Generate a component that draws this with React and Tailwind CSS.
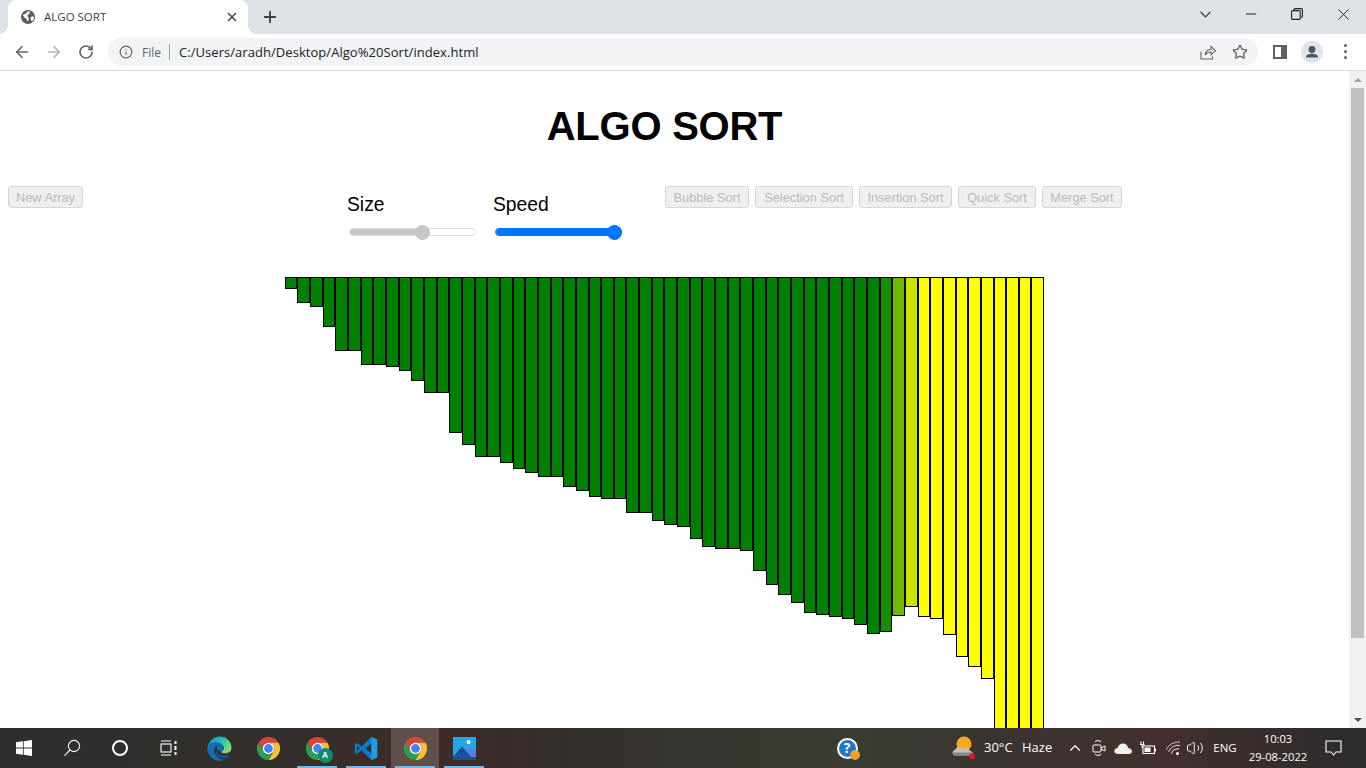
import React from "react";
import { ArrowLeft, ArrowRight, RotateCw, Info, Star, Plus, X, ChevronDown, Minus, ChevronUp, Volume2 } from "lucide-react";

const bottoms = [289,303,307,327,351,351,365,365,367,371,381,393,393,433,445,457,457,463,469,473,477,477,487,491,497,499,499,513,513,521,525,527,539,547,549,549,551,571,585,595,603,613,615,617,619,625,634,632,616,607,617,619,635,657,667,679,800,800,800,800];
const barColor = (i) => {
  if (i === 47) return "#148f00";
  if (i === 48) return "#6fb800";
  if (i === 49) return "#c8e400";
  return i < 48 ? "#008000" : "#ffff00";
};

function ChromeLogo({ size = 23 }) {
  return (
    <svg width={size} height={size} viewBox="0 0 24 24">
      <path d="M1.6 6A12 12 0 0 1 22.4 6H12A6 6 0 0 0 6.8 15Z" fill="#db4437" />
      <path d="M22.4 6A12 12 0 0 1 12 24L17.2 15A6 6 0 0 0 12 6Z" fill="#fbc02d" />
      <path d="M12 24A12 12 0 0 1 1.6 6L6.8 15A6 6 0 0 0 17.2 15Z" fill="#2e9e4f" />
      <circle cx="12" cy="12" r="6" fill="#fff" />
      <circle cx="12" cy="12" r="4.6" fill="#4285f4" />
    </svg>
  );
}

function Edge() {
  return (
    <svg width="25" height="25" viewBox="0 0 24 24">
      <defs>
        <linearGradient id="eg" x1="0" y1="0" x2="1" y2="0.6">
          <stop offset="0" stopColor="#1a8fd6" />
          <stop offset="0.6" stopColor="#2cc3b0" />
          <stop offset="1" stopColor="#7ee06a" />
        </linearGradient>
      </defs>
      <path d="M12 0.5C18.5 0.5 23.5 5 23.5 11.5C23.5 15 20.5 16.5 17.5 16.5C15 16.5 13.5 15.8 13 15C15.5 14.5 16.5 12.5 16 10.5C15 7 10 5.5 6 8C3 10 1.5 12.5 0.7 15C-0.2 7 5 0.5 12 0.5Z" fill="url(#eg)" />
      <path d="M0.7 12C1 7 6 5 10 6C14 7 16.5 10 15.8 12.5C15 14.5 13 14.8 12 14.5C8.5 13.5 9 10 10.5 9C6.5 10 6 14 8 17.5C9.5 20.5 13 23 16.5 22.5C14.5 23.5 13 23.7 12 23.7C5 23.7 0.3 18 0.7 12Z" fill="#0f6fb5" />
      <path d="M9 18C10.5 20.5 14 23 18 21.5C20 20.5 21.5 19 22.5 17C20 18.5 16 19 13 18C10 17 8.5 14 8.8 12C8 14 8 16 9 18Z" fill="#1c4f8f" />
    </svg>
  );
}

function VSCode() {
  return (
    <svg width="24" height="25" viewBox="0 0 24 24">
      <path d="M17.4 0.5L7.4 10 3 6.6 0.8 7.7v8.6L3 17.4 7.4 14l10 9.5 5.8-2.6V3.1Z M17.4 7L11.2 12l6.2 5Z M3 9.2L5.6 12 3 14.8Z" fillRule="evenodd" fill="#0a7ccc" />
      <path d="M17.4 0.5l5.8 2.6v17.8l-5.8 2.6Z" fill="#1e9ce8" />
    </svg>
  );
}

function Photos() {
  return (
    <svg width="23" height="23" viewBox="0 0 23 23">
      <rect width="23" height="23" fill="#26a6e6" />
      <circle cx="15.5" cy="5" r="2" fill="#fff" />
      <path d="M14 14L18 9.5L23 15V23H14Z" fill="#5a7fd8" />
      <path d="M0 20L9 9.5L21 23H0Z" fill="#1d4f9c" />
      <rect y="20" width="23" height="3" fill="#1d4f9c" />
    </svg>
  );
}

function Btn({ w, children }) {
  return (
    <button className={`${w} h-[22px] shrink-0 flex items-center justify-center rounded-[3px] border border-[#d6d6d6] bg-[#efefef] text-[12.8px] text-[#bababa]`}>
      <span className="mt-px">{children}</span>
    </button>
  );
}

function Slider({ label, fill, track, thumbLeft, borderCls }) {
  return (
    <div className="w-[146px] shrink-0 mt-[7px]">
      <div className="pl-px text-[19.3px] leading-6 text-black">{label}</div>
      <div className="relative ml-[3px] mt-2 h-[14px] w-[127px]">
        <div className={`absolute inset-x-0 top-[3px] h-2 rounded-full border ${borderCls} bg-white overflow-hidden`}>
          <div className={`h-full ${fill}`} style={{ width: track }} />
        </div>
        <div className={`absolute top-0 h-[15px] w-[15px] rounded-full ${fill}`} style={{ left: thumbLeft }} />
      </div>
    </div>
  );
}

function AppCell({ active, line, children }) {
  return (
    <div className={`relative flex h-10 w-12 items-center justify-center ${active ? "bg-[#5f504c]" : ""}`}>
      {children}
      {line && <div className="absolute bottom-0 left-1 h-[2px] w-10 bg-[#76b9ed]" />}
    </div>
  );
}

function Cell({ w = "w-6", children }) {
  return <div className={`flex h-10 ${w} shrink-0 items-center justify-center`}>{children}</div>;
}

export default function App() {
  return (
    <div className="flex h-screen w-full flex-col overflow-hidden bg-white font-['Liberation_Sans',sans-serif]">
      {/* tab strip */}
      <div className="flex h-[34px] shrink-0 items-stretch bg-[#dee1e6] pl-2">
        <div className="relative flex w-[240px] items-center rounded-t-lg bg-white pl-[13px] pr-2">
          <div className="absolute -left-2 bottom-0 h-2 w-2 bg-[radial-gradient(circle_at_0_0,#dee1e6_7.5px,#fff_8px)]" />
          <div className="absolute -right-2 bottom-0 h-2 w-2 bg-[radial-gradient(circle_at_100%_0,#dee1e6_7.5px,#fff_8px)]" />
          <svg width="14" height="14" viewBox="0 0 16 16" className="shrink-0">
            <circle cx="8" cy="8" r="8" fill="#5a5e63" />
            <path d="M2 5.5L6 4 7 2l3-.8L9.5 4 7 6.5 9 9l-1 4.5L6 10 4 8.5ZM11 8l3-1 1 2-2 4-2-2Z" fill="#fff" />
          </svg>
          <span className="ml-[9px] flex-1 font-['Open_Sans',sans-serif] text-[11.5px] text-[#3c4043]">ALGO SORT</span>
          <X size={14} strokeWidth={2.6} className="mr-[1px] text-[#45494e]" />
        </div>
        <div className="ml-[13px] flex w-[18px] items-center justify-center">
          <Plus size={18} strokeWidth={2.4} className="text-[#3c4043]" />
        </div>
        <div className="ml-auto flex items-stretch text-[#202124]">
          <div className="flex w-[46px] items-start justify-center pt-[5px]"><ChevronDown size={19} strokeWidth={1.3} /></div>
          <div className="flex w-[46px] items-start justify-center pt-[6px]"><Minus size={16} strokeWidth={1.6} /></div>
          <div className="flex w-[46px] items-start justify-center pt-[8px]">
            <svg width="12" height="12" viewBox="0 0 12 12" fill="none" stroke="#202124" strokeWidth="1.1">
              <rect x="0.6" y="2.6" width="8.6" height="8.8" rx="1" />
              <path d="M3 2.4V1.6a1 1 0 0 1 1-1h6.4a1 1 0 0 1 1 1v6.6a1 1 0 0 1-1 1h-1" />
            </svg>
          </div>
          <div className="flex w-[46px] items-start justify-center pt-[5px]"><X size={19} strokeWidth={1.2} /></div>
        </div>
      </div>

      {/* toolbar */}
      <div className="flex h-[37px] shrink-0 items-center border-b border-[#dadce0] bg-white pb-px pl-[6px]">
        <div className="flex h-8 w-8 items-center justify-center"><ArrowLeft size={18} strokeWidth={2.3} className="text-[#5f6368]" /></div>
        <div className="flex h-8 w-8 items-center justify-center"><ArrowRight size={18} strokeWidth={2.3} className="text-[#b4b7ba]" /></div>
        <div className="flex h-8 w-8 items-center justify-center"><RotateCw size={16} strokeWidth={2.5} className="text-[#5f6368]" /></div>
        <div className="ml-[6px] flex h-7 w-[1150px] items-center rounded-full bg-[#f1f3f4] pl-[11px] pr-[9px]">
          <Info size={14} strokeWidth={2} className="text-[#5f6368]" />
          <span className="ml-[9px] mt-[2px] font-['Open_Sans',sans-serif] text-[12px] text-[#5f6368]">File</span>
          <div className="ml-[8px] h-[16px] w-px bg-[#9aa0a6]" />
          <span className="ml-[9px] mt-[2px] font-['Open_Sans',sans-serif] text-[13px] tracking-[0.05px] text-[#202124]">C:/Users/aradh/Desktop/Algo%20Sort/index.html</span>
          <svg width="16" height="16" viewBox="0 0 16 16" fill="none" stroke="#5f6368" strokeWidth="1.1" className="ml-auto mr-4">
            <path d="M1 7.5V15H12.5V12.5" />
            <path d="M5 11C5.5 7.5 8 5.5 11 5.5V2.5L15.5 6.8 11 10.8V8C8.5 8 6.5 9 5 11Z" />
          </svg>
          <Star size={16} strokeWidth={2} className="mr-[1px] text-[#5f6368]" />
        </div>
        <div className="ml-[6px] flex h-8 w-8 items-center justify-center">
          <div className="h-[14px] w-[14px] bg-[#5f6368] p-[2px] pr-[6px]"><div className="h-full w-full bg-white" /></div>
        </div>
        <div className="flex h-8 w-8 items-center justify-center">
          <svg width="22" height="22" viewBox="0 0 22 22">
            <circle cx="11" cy="11" r="11" fill="#e1e4e9" />
            <circle cx="11" cy="8.5" r="3.4" fill="#4a5470" />
            <path d="M5 16.5C5 13.5 8 12.8 11 12.8S17 13.5 17 16.5Z" fill="#4a5470" />
          </svg>
        </div>
        <div className="ml-px flex h-8 w-8 flex-col items-center justify-center gap-[3px]">
          <div className="h-[3px] w-[3px] rounded-full bg-[#5f6368]" />
          <div className="h-[3px] w-[3px] rounded-full bg-[#5f6368]" />
          <div className="h-[3px] w-[3px] rounded-full bg-[#5f6368]" />
        </div>
      </div>

      {/* page */}
      <div className="flex min-h-0 flex-1">
        <main className="min-w-0 flex-1 overflow-hidden pr-5">
          <h1 className="mt-[31px] text-center text-[40px] font-bold leading-[48px] tracking-[-0.25px] text-black">ALGO SORT</h1>
          <div className="mt-9 flex items-start pl-2">
            <Btn w="w-[75px]">New Array</Btn>
            <div className="ml-[263px] flex">
              <Slider label="Size" fill="bg-[#c6c6c6]" track="58%" thumbLeft="66px" borderCls="border-[#dcdcdc]" />
              <Slider label="Speed" fill="bg-[#0075ff]" track="100%" thumbLeft="112px" borderCls="border-[#0075ff]" />
            </div>
            <div className="ml-[27px] flex gap-[6px]">
              <Btn w="w-[84px]">Bubble Sort</Btn>
              <Btn w="w-[98px]">Selection Sort</Btn>
              <Btn w="w-[93px]">Insertion Sort</Btn>
              <Btn w="w-[78px]">Quick Sort</Btn>
              <Btn w="w-[80px]">Merge Sort</Btn>
            </div>
          </div>
          <div className="mt-[38px] flex justify-center">
            <div className="flex w-[759.5px] items-start">
              {bottoms.map((b, i) => (
                <div
                  key={i}
                  className="flex-1 border border-black"
                  style={{ height: b - 277, backgroundColor: barColor(i) }}
                />
              ))}
            </div>
          </div>
        </main>
        <div className="flex w-[17px] shrink-0 flex-col bg-[#f1f1f1]">
          <div className="flex h-[17px] items-center justify-center">
            <div className="h-0 w-0 border-x-[4px] border-b-[4px] border-x-transparent border-b-[#a3a3a3]" />
          </div>
          <div className="ml-[2px] h-[550px] w-[13px] bg-[#c1c1c1]" />
          <div className="flex-1" />
          <div className="flex h-[17px] items-center justify-center">
            <div className="h-0 w-0 border-x-[4px] border-t-[4px] border-x-transparent border-t-[#505050]" />
          </div>
        </div>
      </div>

      {/* taskbar */}
      <div className="flex h-10 shrink-0 items-center bg-[linear-gradient(90deg,#2e2e2c_0%,#332f2c_20%,#3d2b29_32%,#35302c_42%,#3a3c33_62%,#3b3330_75%,#43302e_85%,#2c2b2b_100%)] font-['Open_Sans',sans-serif] text-white">
        <Cell w="w-12">
          <svg width="16" height="16" viewBox="0 0 16 16" fill="#fff">
            <path d="M0 2.3L6.9 1.3V7.6H0ZM7.7 1.2L16 0V7.6H7.7ZM0 8.4H6.9V14.7L0 13.7ZM7.7 8.4H16V16L7.7 14.8Z" />
          </svg>
        </Cell>
        <Cell w="w-12">
          <svg width="18" height="18" viewBox="0 0 18 18" fill="none" stroke="#fff" strokeWidth="1.1">
            <circle cx="11" cy="7" r="5.6" />
            <path d="M7 11L1.5 16.7" />
          </svg>
        </Cell>
        <Cell w="w-12">
          <div className="h-[16px] w-[16px] rounded-full border-[2.5px] border-white" />
        </Cell>
        <Cell w="w-12">
          <svg width="17" height="16" viewBox="0 0 17 16" fill="none" stroke="#fff" strokeWidth="1.1">
            <path d="M1 1H11M1 15H11" />
            <rect x="1" y="4" width="10" height="8" />
            <path d="M15.5 1v3M15.5 6v4M15.5 12v3" strokeWidth="2" />
          </svg>
        </Cell>
        <div className="ml-[3px] flex gap-px">
          <AppCell><Edge /></AppCell>
          <AppCell><ChromeLogo /></AppCell>
          <AppCell line>
            <div className="relative">
              <ChromeLogo />
              <div className="absolute -bottom-[3px] -right-[4px] flex h-[15px] w-[15px] items-center justify-center rounded-full bg-[#0f8a6e] text-[8px] font-bold text-white">A</div>
            </div>
          </AppCell>
          <AppCell line><VSCode /></AppCell>
          <AppCell active line><ChromeLogo /></AppCell>
          <AppCell line><Photos /></AppCell>
        </div>
        <div className="ml-[338px] flex h-10 w-[42px] items-center justify-center">
          <div className="relative flex h-[21px] w-[21px] items-center justify-center rounded-full border-2 border-white bg-[#1b78c8] text-[14px] font-bold leading-none text-white">
            ?
            <div className="absolute -bottom-[3px] -right-[4px] h-[10px] w-[10px] rounded-full bg-[#eba428]" />
          </div>
        </div>
        <div className="ml-[81px] flex h-10 w-[30px] items-center justify-center">
          <svg width="24" height="24" viewBox="0 0 24 24">
            <circle cx="12" cy="8" r="7.5" fill="#f5a623" />
            <path d="M3 19.5C0 19.5 -0.5 14.5 3 14C4 10.5 9 10 11 12.5C13 11 17.5 12 18 15C21.5 15 22 19.5 18 19.5Z" fill="#c4bfb0" />
            <path d="M3 19.5C1.5 19.5 0.5 18 0.5 16.5H21C21 18.5 19 19.5 18 19.5Z" fill="#7f8a96" />
            <circle cx="20" cy="20.5" r="3" fill="#e81123" />
          </svg>
        </div>
        <span className="ml-[5px] w-[38px] text-[13px]">30°C</span>
        <span className="w-[41px] text-[13px]">Haze</span>
        <Cell><ChevronUp size={18} strokeWidth={1.5} /></Cell>
        <Cell>
          <svg width="14" height="18" viewBox="0 0 14 18" fill="none" stroke="#fff" strokeWidth="1">
            <rect x="1" y="6" width="8" height="7" rx="1" />
            <path d="M9 9l4-2v5l-4-2" />
            <path d="M3 2.5Q6 0.5 9 2.5M3 15.5Q6 17.5 9 15.5" />
          </svg>
        </Cell>
        <Cell>
          <svg width="18" height="12" viewBox="0 0 18 12" fill="#f2f2f2">
            <path d="M4 12C1 12 0 10 0.5 8.3 1 6.8 2.5 6 3.5 6 4.2 3 7 1 10 1.5 12.5 2 14 4 14 6 16.5 6 18 8 18 9.5 18 11 16.5 12 15 12Z" />
          </svg>
        </Cell>
        <Cell>
          <svg width="17" height="14" viewBox="0 0 17 14" fill="none" stroke="#fff" strokeWidth="1.1">
            <rect x="4" y="5" width="11.5" height="7.5" />
            <rect x="5.5" y="6.5" width="6" height="4.5" fill="#fff" stroke="none" />
            <path d="M16.5 7.5v3" />
            <path d="M1 3.5h4.5M2 0.5v3M4.5 0.5v3M3.2 3.5v3H4" />
          </svg>
        </Cell>
        <Cell>
          <svg width="16" height="15" viewBox="0 0 16 15" fill="none" stroke="#fff" strokeWidth="1" className="translate-x-[2px]">
            <path d="M1 9A14 14 0 0 1 15 1" opacity="0.7" />
            <path d="M3.5 11A10 10 0 0 1 15 4.5" opacity="0.8" />
            <path d="M6.5 12.5A6 6 0 0 1 14 8" />
            <circle cx="12.5" cy="12.5" r="1.5" fill="#fff" stroke="none" />
          </svg>
        </Cell>
        <Cell><Volume2 size={18} strokeWidth={1.2} /></Cell>
        <div className="flex w-9 shrink-0 justify-center text-[11.5px]">ENG</div>
        <div className="flex w-[70px] shrink-0 flex-col items-center text-[11.2px] leading-[18px]">
          <span>10:03</span>
          <span>29-08-2022</span>
        </div>
        <Cell w="w-10">
          <svg width="17" height="16" viewBox="0 0 17 16" fill="none" stroke="#fff" strokeWidth="1.1">
            <path d="M1 1H16V12H11L8.5 15 6 12H1Z" />
          </svg>
        </Cell>
      </div>
    </div>
  );
}
